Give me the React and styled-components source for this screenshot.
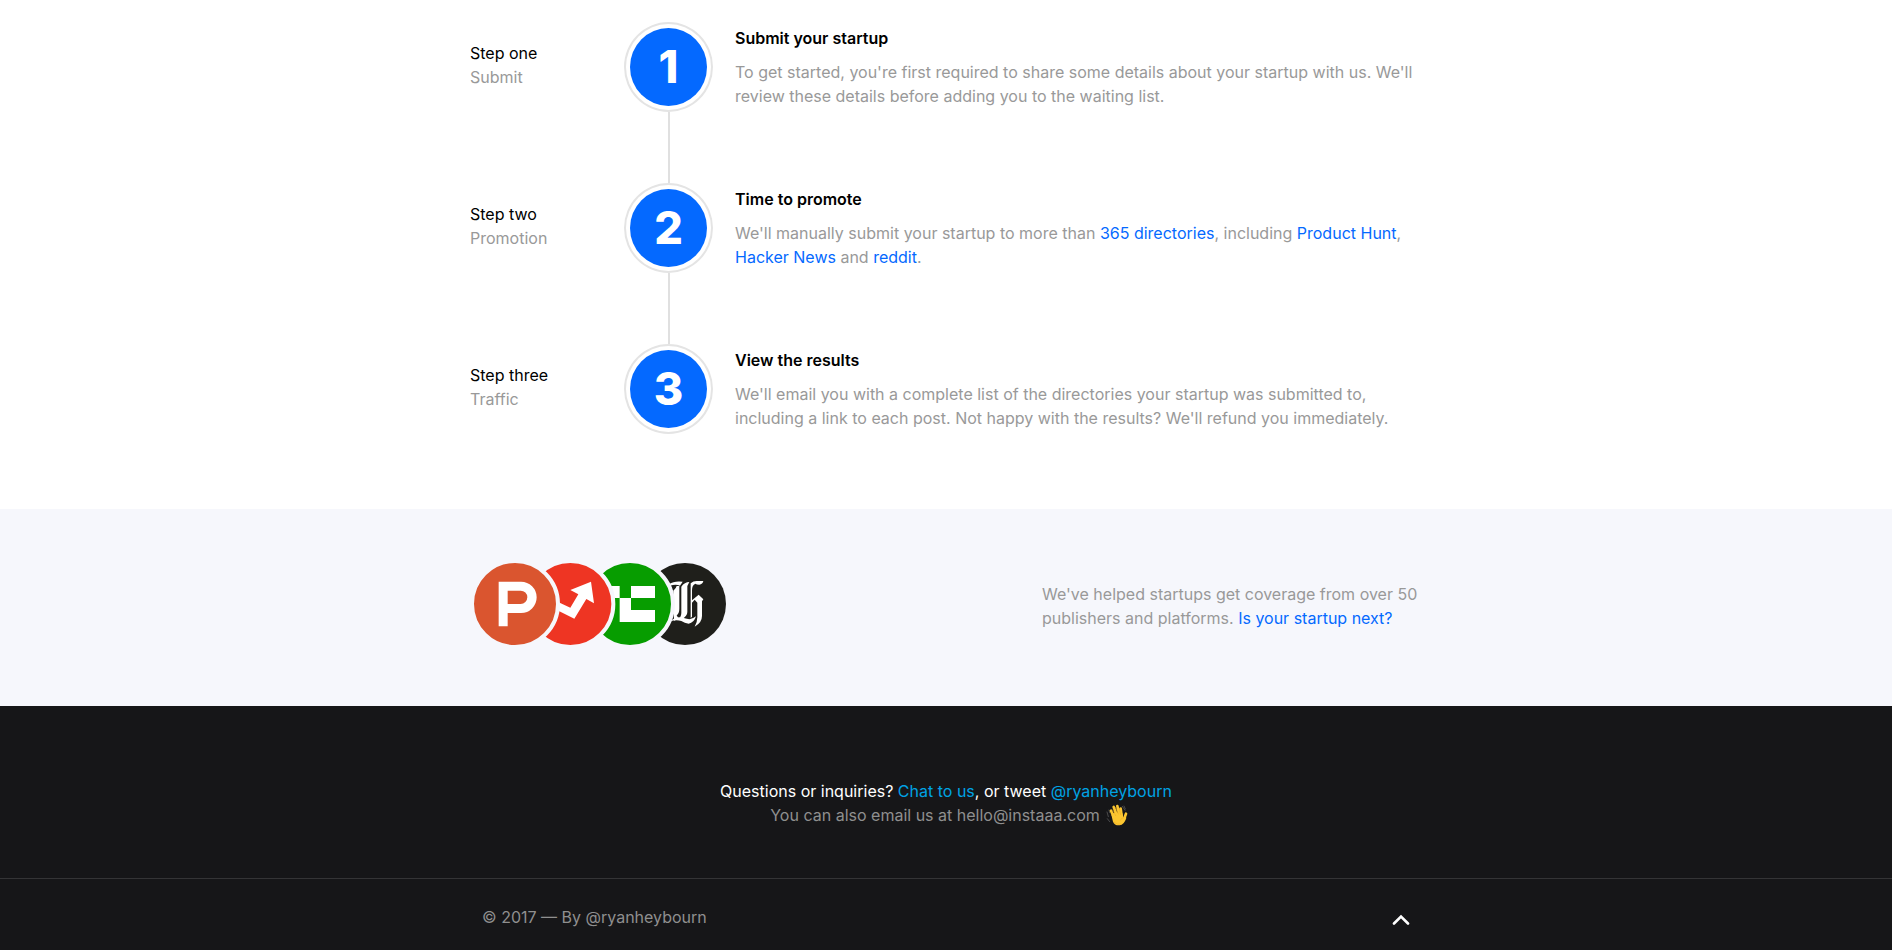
import React from "react";
import styled, { createGlobalStyle } from "styled-components";

const GlobalStyle = createGlobalStyle`
  * { box-sizing: border-box; }
  body {
    margin: 0;
    background: #fff;
    color: #000;
    font: 400 16px/24px Inter, "Liberation Sans", sans-serif;
  }
  h3, p, ol { margin: 0; padding: 0; }
`;

const Container = styled.div`
  max-width: 952px;
  margin: 0 auto;
`;

const Steps = styled.section`
  padding: 22px 0 75px;
`;

const StepList = styled.ol`
  list-style: none;
  display: flex;
  flex-direction: column;
`;

const Step = styled.li`
  display: grid;
  grid-template-columns: 154px 89px 1fr;
`;

const StepLabel = styled.div`
  height: 86px;
  display: flex;
  flex-direction: column;
  justify-content: center;
`;

const Muted = styled.span`
  color: #999;
`;

const Track = styled.div`
  display: flex;
  flex-direction: column;
  align-items: center;
`;

const Badge = styled.div`
  width: 89px;
  height: 90px;
  padding: 4px;
  border: 2px solid #e4e4e4;
  border-radius: 50%;
`;

const Digit = styled.div`
  height: 100%;
  display: flex;
  align-items: center;
  justify-content: center;
  border-radius: 50%;
  background: #0469ff;
  color: #fff;
  font-size: 45px;
  font-weight: 800;
`;

const Connector = styled.div`
  width: 2px;
  height: 71px;
  background: #e0e0e0;
`;

const StepBody = styled.div`
  padding: 4px 0 0 22px;
`;

const StepTitle = styled.h3`
  margin-bottom: 10px;
  font-size: 16px;
  font-weight: 600;
`;

const Copy = styled.p`
  color: #999;
`;

const Link = styled.a`
  color: ${(p) => (p.$onDark ? "#00a3e4" : "#0469ff")};
  text-decoration: none;
`;

const Press = styled.section`
  background: #f6f7fc;
  padding: 54px 0 61px;
`;

const PressRow = styled(Container)`
  display: flex;
  align-items: center;
  justify-content: space-between;
  padding-left: 4px;
`;

const PressCopy = styled(Copy)`
  width: 380px;
  padding-top: 4px;
`;

const Footer = styled.footer`
  background: #161618;
`;

const Contact = styled.div`
  padding: 73px 0 51px;
  color: #fff;
  text-align: center;
  border-bottom: 1px solid #343436;
`;

const ContactNote = styled.p`
  display: flex;
  align-items: center;
  justify-content: center;
  gap: 6px;
  padding-left: 6px;
  color: #8f8f8f;
`;

const Legal = styled(Container)`
  display: flex;
  align-items: center;
  justify-content: space-between;
  padding: 26px 12px 22px;
  color: #8f8f8f;
`;

const TopButton = styled.button`
  display: flex;
  padding: 4px 0 0;
  border: 0;
  background: none;
  cursor: pointer;
`;

const steps = [
  {
    label: "Step one",
    note: "Submit",
    title: "Submit your startup",
    body: (
      <>
        To get started, you're first required to share some details about your startup with us. We'll
        <br />
        review these details before adding you to the waiting list.
      </>
    ),
  },
  {
    label: "Step two",
    note: "Promotion",
    title: "Time to promote",
    body: (
      <>
        We'll manually submit your startup to more than <Link href="#directories">365 directories</Link>, including{" "}
        <Link href="#product-hunt">Product Hunt</Link>,<br />
        <Link href="#hacker-news">Hacker News</Link> and <Link href="#reddit">reddit</Link>.
      </>
    ),
  },
  {
    label: "Step three",
    note: "Traffic",
    title: "View the results",
    body: (
      <>
        We'll email you with a complete list of the directories your startup was submitted to,
        <br />
        including a link to each post. Not happy with the results? We'll refund you immediately.
      </>
    ),
  },
];

const PressLogos = () => (
  <svg width="252" height="82" viewBox="44 69 754 246" role="img" aria-label="Publishers and platforms">
    <circle cx="676" cy="192" r="123" fill="#1f1f1b" />
    <g fill="#fff" transform="translate(585 90)">
      <path d="M44 42q14-10 40-7l-8 12q-12-5-30 0z" />
      <path d="M56 62q8-6 10-14h8v68q0 14-8 20l6 10-14 6z" />
      <path d="M80 50q10-14 24-14l-6 12v78q0 12-16 22l-6-5q4-6 4-14z" />
      <path d="M108 40q8-7 18-7l20 0q-2 10-12 11-8 0-12-3-10 4-10 20v30l20-17 14 14-4 6v44q0 20-22 32 8-14 8-28V98l-8-9-8 9v42l-4 4z" />
      <path d="M48 153q14-14 32-11 14 4 24 6 10-1 20-9-6 20-22 22-12-2-22-8-14-4-32 0z" />
    </g>
    <circle cx="511" cy="192" r="129" fill="#079d00" stroke="#f6f7fc" strokeWidth="12" />
    <path fill="#fff" d="M430 138h50v36h-50zM514 138h72v36h-72zM480 174h34v36h72v36H480z" />
    <circle cx="332" cy="192" r="129" fill="#ee3523" stroke="#f6f7fc" strokeWidth="12" />
    <path fill="#fff" d="M270 178l30 10l32 15l24-40l-24-13l62-25l9 65l-23-13l-36 59l-42-21l-40-18z" />
    <circle cx="166" cy="192" r="129" fill="#da552f" stroke="#f6f7fc" strokeWidth="12" />
    <path fill="#fff" fillRule="evenodd" d="M117 125h67a47 47 0 0 1 0 94h-40v40h-27zM144 152v40h39a20 20 0 0 0 0-40z" />
  </svg>
);

const WavingHand = () => (
  <svg width="22" height="22" viewBox="0 0 66 66" role="img" aria-label="Waving hand">
    <g fill="none" stroke="#4a4a4c" strokeWidth="3" strokeLinecap="round">
      <path d="M3 24l4 14M9 18l2 8M4 44l7 9M49 7l8 12M54 6l4 9" />
    </g>
    <g fill="none" stroke="#fcc630" strokeWidth="8" strokeLinecap="round">
      <path d="M15 20l10 23M23 9l10 26M34 6l6 26M44 14l3 22M60 29l-6 16" />
    </g>
    <path fill="#fcc630" d="M16 32l10-7l23 3l3 13q3-5 7-4l2 5q-7 21-20 22q-16 1-20-11z" />
    <g fill="none" stroke="#e8a622" strokeWidth="1.500" strokeLinecap="round">
      <path d="M20 18l9 17M29 10l8 20M40 13l4 19M43 49q2-8 9-8M24 54q10 10 20 7" />
    </g>
  </svg>
);

export default function App() {
  return (
    <>
      <GlobalStyle />
      <main>
        <Steps>
          <Container>
            <StepList>
              {steps.map((step, i) => (
                <Step key={step.label}>
                  <StepLabel>
                    <span>{step.label}</span>
                    <Muted>{step.note}</Muted>
                  </StepLabel>
                  <Track>
                    <Badge>
                      <Digit>{i + 1}</Digit>
                    </Badge>
                    {i < steps.length - 1 && <Connector />}
                  </Track>
                  <StepBody>
                    <StepTitle>{step.title}</StepTitle>
                    <Copy>{step.body}</Copy>
                  </StepBody>
                </Step>
              ))}
            </StepList>
          </Container>
        </Steps>
        <Press>
          <PressRow>
            <PressLogos />
            <PressCopy>
              We've helped startups get coverage from over 50
              <br />
              publishers and platforms. <Link href="#submit">Is your startup next?</Link>
            </PressCopy>
          </PressRow>
        </Press>
      </main>
      <Footer>
        <Contact>
          <p>
            Questions or inquiries? <Link $onDark href="#chat">Chat to us</Link>, or tweet{" "}
            <Link $onDark href="#twitter">@ryanheybourn</Link>
          </p>
          <ContactNote>
            You can also email us at hello@instaaa.com
            <WavingHand />
          </ContactNote>
        </Contact>
        <Legal>
          <span>© 2017 — By @ryanheybourn</span>
          <TopButton type="button" aria-label="Back to top">
            <svg width="18" height="11" viewBox="0 0 18 11" fill="none" stroke="#fff" strokeWidth="2.600" strokeLinecap="round">
              <path d="M2 9.500l7-7l7 7" />
            </svg>
          </TopButton>
        </Legal>
      </Footer>
    </>
  );
}
